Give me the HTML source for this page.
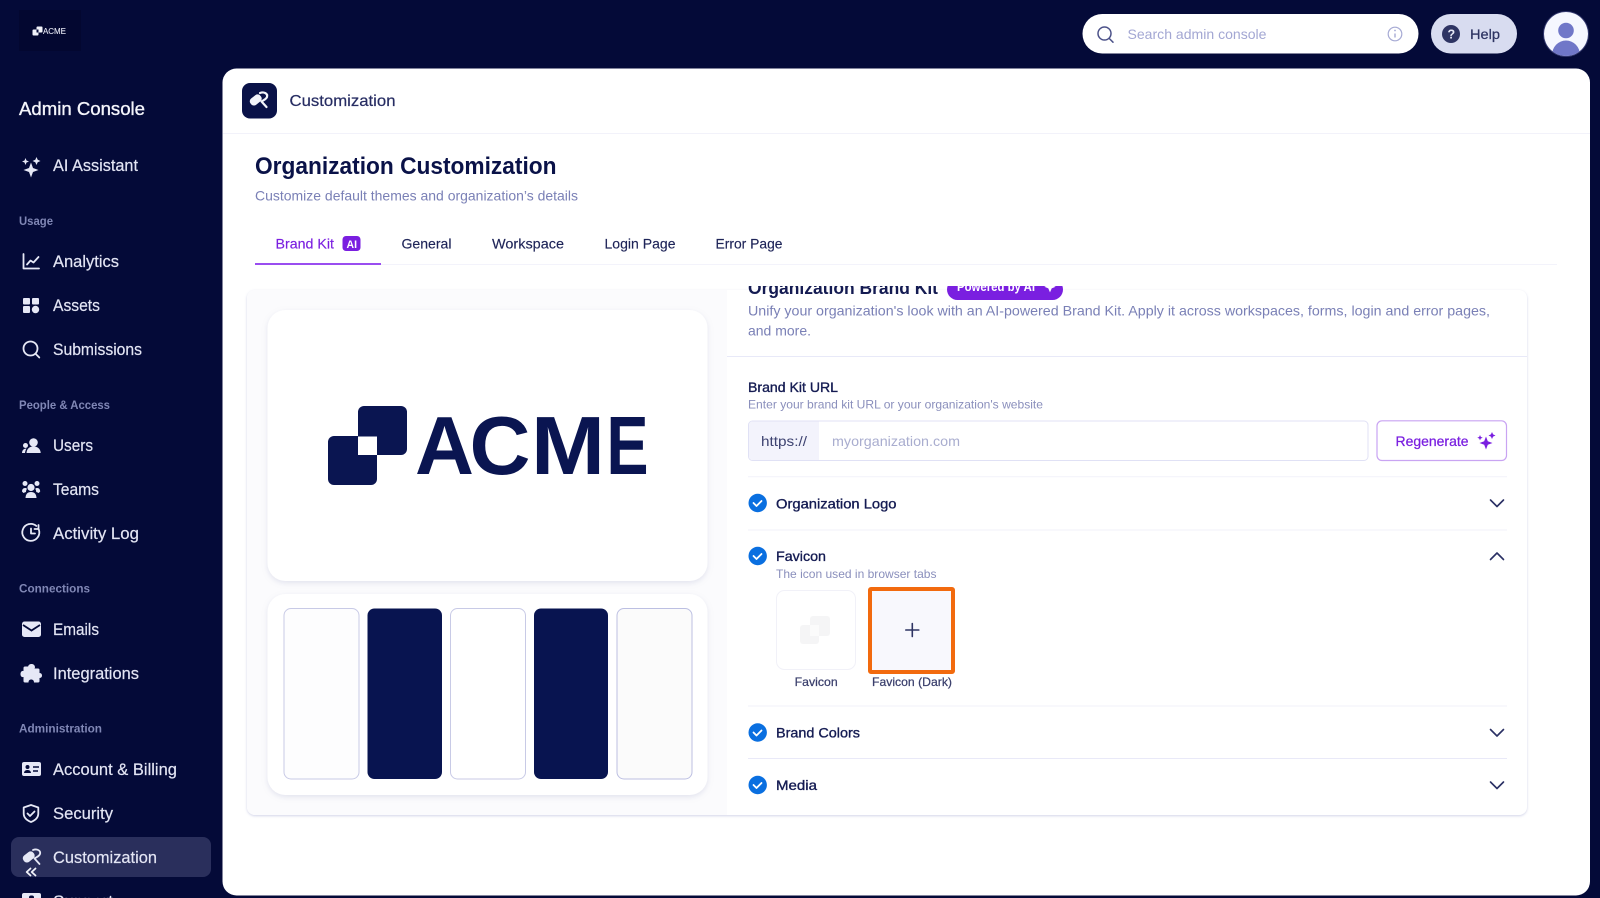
<!DOCTYPE html>
<html lang="en">
<head>
<meta charset="utf-8">
<title>Organization Customization</title>
<style>
html,body{margin:0;padding:0;width:1600px;height:898px;overflow:hidden;background:#040a38}
svg{display:block}
text{font-family:"Liberation Sans",sans-serif}
.nav{font-size:16.5px;fill:#e3e5f4;stroke:#e3e5f4;stroke-width:.18}
.lab{font-size:12px;font-weight:700;fill:#8087b5}
.tab{font-size:14px;fill:#1e2458;stroke:#1e2458;stroke-width:.15}
.h{font-size:14px;fill:#141b52;stroke:#141b52;stroke-width:.35}
.sub{font-size:12px;fill:#8a8fbc}
.cap{font-size:12px;fill:#3a3f6c;stroke:#3a3f6c;stroke-width:.25}
.ic{fill:#e6e8f6}
.st{fill:none;stroke:#e6e8f6;stroke-width:1.8;stroke-linecap:round;stroke-linejoin:round}
.chev{fill:none;stroke:#2a3064;stroke-width:1.6;stroke-linecap:round;stroke-linejoin:round}
.div{stroke:#f2f2fa;stroke-width:1}
.big{font-size:83px;font-weight:700;fill:#0a1551}
</style>
</head>
<body>
<svg xmlns="http://www.w3.org/2000/svg" width="1600" height="898" viewBox="0 0 1600 898">
<defs>
<filter id="sh" x="-5%" y="-5%" width="110%" height="110%"><feDropShadow dx="0" dy="1" stdDeviation="1.2" flood-color="#9a9fce" flood-opacity=".45"/></filter>
<filter id="sh2" x="-5%" y="-5%" width="110%" height="110%"><feDropShadow dx="0" dy="2" stdDeviation="3" flood-color="#8a8fb8" flood-opacity=".22"/></filter>
<clipPath id="clipT"><rect x="740" y="286" width="700" height="40"/></clipPath>
<clipPath id="clipAv"><circle cx="1566" cy="34" r="22"/></clipPath>
</defs>

<!-- background -->
<rect width="1600" height="898" fill="#040a38"/>
<rect x="19" y="10" width="62" height="41" fill="#030730"/>
<!-- small logo -->
<rect x="36.500" y="26.500" width="6" height="6" rx="1" fill="#f2f3fa"/>
<rect x="32.500" y="29.500" width="6" height="6" rx="1" fill="#f2f3fa"/>
<rect x="36.500" y="29.500" width="2" height="3" fill="#040a38"/>
<text x="43" y="34" font-size="8.500" fill="#e8e9f5" stroke="#e8e9f5" stroke-width=".1" textLength="23" lengthAdjust="spacingAndGlyphs">ACME</text>

<!-- main panel -->
<rect x="222.500" y="68.500" width="1367.500" height="827" rx="14" fill="#ffffff"/>

<!-- sidebar -->
<text x="19" y="115" font-size="18" fill="#f4f5fb" stroke="#f4f5fb" stroke-width=".35" textLength="126" lengthAdjust="spacingAndGlyphs">Admin Console</text>

<path class="ic" d="M31 162.500l2 5.500 5.500 2-5.500 2-2 5.500-2-5.500-5.500-2 5.500-2zM25.500 158l1 2.500 2.500 1-2.500 1-1 2.500-1-2.500-2.500-1 2.500-1zM36.500 157l1.200 2.800 2.800 1.200-2.800 1.200-1.200 2.800-1.200-2.800-2.800-1.200 2.800-1.200z"/>
<text class="nav" x="53" y="171" textLength="85" lengthAdjust="spacingAndGlyphs">AI Assistant</text>

<text class="lab" x="19" y="225" textLength="34" lengthAdjust="spacingAndGlyphs">Usage</text>
<path class="st" d="M23.500 254v14.500h15.500"/><path class="st" d="M27 264.500l3.500-4 3 2 5-5.500"/>
<text class="nav" x="53" y="267" textLength="66" lengthAdjust="spacingAndGlyphs">Analytics</text>
<rect class="ic" x="23" y="306" width="7" height="7" rx="1"/><circle class="ic" cx="35.500" cy="309.500" r="3.700"/><rect class="ic" x="23" y="298" width="7" height="6.500" rx="1"/><rect class="ic" x="32" y="298" width="7" height="6.500" rx="1"/>
<text class="nav" x="53" y="311" textLength="47" lengthAdjust="spacingAndGlyphs">Assets</text>
<circle class="st" cx="30.500" cy="348.500" r="7"/><path class="st" d="M35.800 354l3.500 3.500"/>
<text class="nav" x="53" y="355" textLength="89" lengthAdjust="spacingAndGlyphs">Submissions</text>

<text class="lab" x="19" y="409" textLength="91" lengthAdjust="spacingAndGlyphs">People &amp; Access</text>
<circle class="ic" cx="33.500" cy="442.500" r="4.300"/><path class="ic" d="M26.500 453c.3-4.500 3-6.500 7-6.500s6.900 2 7.200 6.500z"/><circle class="ic" cx="25.500" cy="445.500" r="2.500"/><path class="ic" d="M22 453c.2-2.700 1.500-4.500 4.500-4.500-.8 1.300-1.300 2.800-1.500 4.500z"/>
<text class="nav" x="53" y="451" textLength="40" lengthAdjust="spacingAndGlyphs">Users</text>
<circle class="ic" cx="31" cy="487.500" r="3.600"/><path class="ic" d="M25.500 498c.2-4 2-6 5.500-6s5.300 2 5.500 6z"/><circle class="ic" cx="25" cy="483.500" r="2.500"/><circle class="ic" cx="37" cy="483.500" r="2.500"/><path class="ic" d="M22 491.500c.1-2 1-3.500 3-3.500 1 0 1.500.3 2 .8-.6 1-1 2-1 3.200-1 .4-1.800.7-2.500 1zM40.200 491.500c-.1-2-1-3.500-3-3.500-1 0-1.500.3-2 .8.600 1 1 2 1 3.200 1 .4 1.800.7 2.500 1z"/>
<text class="nav" x="53" y="495" textLength="46" lengthAdjust="spacingAndGlyphs">Teams</text>
<path class="st" d="M38.800 529.500a8.500 8.500 0 1 1-2.500-3.600"/><path class="st" d="M38.500 525v4h-4"/><path class="st" d="M31 528.500v5h4"/>
<text class="nav" x="53" y="539" textLength="86" lengthAdjust="spacingAndGlyphs">Activity Log</text>

<text class="lab" x="19" y="592.500" textLength="71" lengthAdjust="spacingAndGlyphs">Connections</text>
<rect class="ic" x="22" y="621.500" width="19" height="15.500" rx="2.500"/><path d="M23 625l8.500 5.500 8.500-5.500" fill="none" stroke="#040a38" stroke-width="1.800"/>
<text class="nav" x="53" y="635" textLength="46" lengthAdjust="spacingAndGlyphs">Emails</text>
<path class="ic" d="M28 667.500c0-2.200 1.500-3.500 3.500-3.500s3.500 1.300 3.500 3.500l-.5 1h3.500c1 0 1.500.5 1.500 1.500v3c2 0 2.500 1.500 2.500 2.500s-.5 2.500-2.500 2.500v3c0 1-.5 1.500-1.500 1.500h-4c0-2-1.200-3-2.800-3s-2.700 1-2.700 3h-3.500c-1 0-1.500-.5-1.500-1.500v-4c-2.500.5-3-1.500-3-3s1-3.500 3-3v-3c0-1 .5-1.500 1.500-1.500h3.500z"/>
<text class="nav" x="53" y="679" textLength="86" lengthAdjust="spacingAndGlyphs">Integrations</text>

<text class="lab" x="19" y="732.500" textLength="83" lengthAdjust="spacingAndGlyphs">Administration</text>
<rect class="ic" x="22" y="762" width="19" height="14" rx="2"/><circle cx="27.500" cy="767" r="2" fill="#040a38"/><path d="M24 773c.2-2 1.500-3 3.500-3s3.300 1 3.500 3z" fill="#040a38"/><path d="M33 767h6M33 771h5" stroke="#040a38" stroke-width="1.500"/>
<text class="nav" x="53" y="775" textLength="124" lengthAdjust="spacingAndGlyphs">Account &amp; Billing</text>
<path class="st" d="M31 805l7.300 2.500v6c0 4-3 6.800-7.300 8.500-4.300-1.700-7.300-4.500-7.300-8.500v-6z"/><path class="st" d="M27.500 813.500l2.500 2.500 4.500-4.500" stroke-width="1.500"/>
<text class="nav" x="53" y="819" textLength="60" lengthAdjust="spacingAndGlyphs">Security</text>

<rect x="11" y="837" width="200" height="40" rx="8" fill="#2a2f5c"/>
<g transform="translate(-227,757)">
<rect class="ic" x="249.500" y="96" width="12.500" height="8" rx="3.500" transform="rotate(-38 255.700 100)"/>
<path class="st" d="M260 93c4-1.500 8 .5 7 4-1 2.500-3.500 3-5.500 4.500l5 5.500" stroke-width="2.200"/>
</g>
<text class="nav" x="53" y="863" textLength="104" lengthAdjust="spacingAndGlyphs">Customization</text>
<path d="M30.500 868.500l-3.800 3.500 3.800 3.500M35.500 868.500l-3.800 3.500 3.800 3.500" fill="none" stroke="#f2f3fa" stroke-width="1.800" stroke-linecap="round" stroke-linejoin="round"/>
<rect class="ic" x="22" y="893" width="19" height="12" rx="2"/><rect x="29" y="895.500" width="5" height="5" rx="2" fill="#040a38"/>
<text class="nav" x="53" y="907" textLength="60" lengthAdjust="spacingAndGlyphs">Support</text>

<!-- top bar -->
<rect x="1082.500" y="14" width="336" height="39.500" rx="19.700" fill="#ffffff"/>
<circle cx="1104.500" cy="33.500" r="6.500" fill="none" stroke="#4c5289" stroke-width="1.500"/><path d="M1109.300 38.500l3.700 3.700" stroke="#4c5289" stroke-width="1.500" stroke-linecap="round"/>
<text x="1127.500" y="39" font-size="14" fill="#a3a7d3" textLength="139" lengthAdjust="spacingAndGlyphs">Search admin console</text>
<circle cx="1395" cy="34" r="6.800" fill="none" stroke="#a6aad4" stroke-width="1.200"/><path d="M1395 33.500v4" stroke="#a6aad4" stroke-width="1.400"/><circle cx="1395" cy="30.500" r=".9" fill="#a6aad4"/>
<rect x="1431" y="14" width="86" height="39.500" rx="19.700" fill="#d8dcf0"/>
<circle cx="1451" cy="34" r="9" fill="#2e3463"/>
<text x="1447.500" y="38.500" font-size="12.500" font-weight="700" fill="#e7e9f6">?</text>
<text x="1470" y="39" font-size="14" fill="#2e3463" stroke="#2e3463" stroke-width=".25" textLength="30" lengthAdjust="spacingAndGlyphs">Help</text>
<circle cx="1566" cy="34" r="23" fill="#30356b"/>
<circle cx="1566" cy="34" r="22" fill="#f5f7ff"/>
<g clip-path="url(#clipAv)"><circle cx="1566" cy="30.500" r="7.800" fill="#7077c8"/><ellipse cx="1566" cy="55" rx="14" ry="14.500" fill="#7077c8"/></g>

<!-- panel header -->
<rect x="242" y="83" width="35" height="35.500" rx="8" fill="#0a1248"/>
<rect x="249.500" y="96" width="12.500" height="8" rx="3.500" fill="#f4f5fb" transform="rotate(-38 255.700 100)"/>
<path d="M260 93c4-1.500 8 .5 7 4-1 2.500-3.500 3-5.500 4.500l5 5.500" fill="none" stroke="#f4f5fb" stroke-width="2.200" stroke-linecap="round" stroke-linejoin="round"/>
<text x="289.500" y="106" font-size="16" fill="#262c62" stroke="#262c62" stroke-width=".2" textLength="106" lengthAdjust="spacingAndGlyphs">Customization</text>
<path d="M223 133.500h1367" stroke="#f2f2fa"/>

<text x="255" y="174" font-size="24" font-weight="700" fill="#0a1248" textLength="301.500" lengthAdjust="spacingAndGlyphs">Organization Customization</text>
<text x="255" y="200.500" font-size="14" fill="#7a80b6" textLength="323" lengthAdjust="spacingAndGlyphs">Customize default themes and organization’s details</text>

<!-- tabs -->
<path d="M255 264.500h1302" stroke="#f3f3fb" stroke-width="1"/>
<rect x="255" y="263" width="126" height="2" fill="#9a4df0"/>
<text x="275.500" y="248.500" font-size="14" fill="#7a1fe0" stroke="#7a1fe0" stroke-width=".15" textLength="58.500" lengthAdjust="spacingAndGlyphs">Brand Kit</text>
<rect x="342.500" y="236" width="18" height="15" rx="3.500" fill="#7a1fe0"/>
<text x="346.500" y="248" font-size="11" font-weight="700" fill="#fff" textLength="10.500" lengthAdjust="spacingAndGlyphs">AI</text>
<text class="tab" x="401.500" y="248.500" textLength="50" lengthAdjust="spacingAndGlyphs">General</text>
<text class="tab" x="492" y="248.500" textLength="72" lengthAdjust="spacingAndGlyphs">Workspace</text>
<text class="tab" x="604.500" y="248.500" textLength="71" lengthAdjust="spacingAndGlyphs">Login Page</text>
<text class="tab" x="715.500" y="248.500" textLength="67" lengthAdjust="spacingAndGlyphs">Error Page</text>

<!-- main card -->
<rect x="247" y="290" width="1280" height="525" rx="8" fill="#fff" filter="url(#sh)"/>
<path d="M255 290h472v525h-472a8 8 0 0 1-8-8v-509a8 8 0 0 1 8-8z" fill="#fbfbfd"/>
<rect x="267.500" y="310" width="440" height="271" rx="18" fill="#fff" filter="url(#sh2)"/>
<rect x="267.500" y="594" width="440" height="201" rx="18" fill="#fff" filter="url(#sh2)"/>

<!-- logo -->
<rect x="358" y="406" width="49" height="49" rx="6" fill="#0a1551"/>
<rect x="328" y="436" width="49" height="49" rx="6" fill="#0a1551"/>
<rect x="358" y="436.500" width="19" height="18.500" fill="#fff"/>
<text class="big" x="415" y="474" textLength="59" lengthAdjust="spacingAndGlyphs">A</text>
<text class="big" x="469.500" y="474" textLength="61" lengthAdjust="spacingAndGlyphs">C</text>
<text class="big" x="531" y="474" textLength="74" lengthAdjust="spacingAndGlyphs">M</text>
<text class="big" x="606.500" y="474" textLength="42" lengthAdjust="spacingAndGlyphs">E</text>

<!-- swatches -->
<rect x="284" y="608.500" width="75" height="170.500" rx="7" fill="#fdfdfe" stroke="#c8cae6"/>
<rect x="367.500" y="608.500" width="74.500" height="170.500" rx="7" fill="#081450"/>
<rect x="450.500" y="608.500" width="75" height="170.500" rx="7" fill="#fff" stroke="#c8cae6"/>
<rect x="534" y="608.500" width="74" height="170.500" rx="7" fill="#081450"/>
<rect x="617" y="608.500" width="75" height="170.500" rx="7" fill="#fbfbfb" stroke="#bcbfe2"/>

<!-- right top clipped -->
<g clip-path="url(#clipT)">
<text x="748" y="294" font-size="18" font-weight="700" fill="#141b52" textLength="190" lengthAdjust="spacingAndGlyphs">Organization Brand Kit</text>
<rect x="947" y="279" width="116" height="21" rx="10.500" fill="#7a1fe0"/>
<text x="957" y="291" font-size="13" font-weight="700" fill="#fff" textLength="78" lengthAdjust="spacingAndGlyphs">Powered by AI</text>
<path d="M1050 281l1.700 4 4 1.700-4 1.700-1.700 4-1.700-4-4-1.700 4-1.700z" fill="#fff"/>
</g>
<text x="748" y="315.500" font-size="14" fill="#7a80b6" textLength="742" lengthAdjust="spacingAndGlyphs">Unify your organization's look with an AI-powered Brand Kit. Apply it across workspaces, forms, login and error pages,</text>
<text x="748" y="335.500" font-size="14" fill="#7a80b6" textLength="63" lengthAdjust="spacingAndGlyphs">and more.</text>
<path d="M727 356.500h800" stroke="#e8e9f8"/>

<text class="h" x="748" y="392" textLength="90" lengthAdjust="spacingAndGlyphs">Brand Kit URL</text>
<text class="sub" x="748" y="408.500" textLength="295" lengthAdjust="spacingAndGlyphs">Enter your brand kit URL or your organization's website</text>

<!-- input -->
<rect x="748.500" y="421" width="619.500" height="39.500" rx="4" fill="#fff" stroke="#e0e1f5"/>
<path d="M752.500 421.500h66.500v38.500h-66.500a3.500 3.500 0 0 1-3.500-3.500v-31.500a3.500 3.500 0 0 1 3.500-3.500z" fill="#f3f3fc"/>
<text x="761" y="446" font-size="14" fill="#3d4270" textLength="46" lengthAdjust="spacingAndGlyphs">https://</text>
<text x="832" y="446" font-size="14" fill="#a9adcf" textLength="128" lengthAdjust="spacingAndGlyphs">myorganization.com</text>
<rect x="1377" y="420.800" width="129.500" height="39.700" rx="5" fill="#fff" stroke="#c9a4f2" stroke-width="1.200"/>
<text x="1395.500" y="446" font-size="14" fill="#7a1fe0" stroke="#7a1fe0" stroke-width=".25" textLength="73" lengthAdjust="spacingAndGlyphs">Regenerate</text>
<path fill="#7a1fe0" d="M1486 436.500l1.800 4.700 4.700 1.800-4.700 1.800-1.800 4.700-1.800-4.700-4.700-1.800 4.700-1.800zM1480 435l.8 1.900 1.900.8-1.900.8-.8 1.900-.8-1.900-1.900-.8 1.900-.8zM1492 432l1.100 2.400 2.400 1.100-2.400 1.100-1.100 2.400-1.100-2.400-2.400-1.100 2.400-1.100z"/>

<!-- accordion -->
<path class="div" d="M748 476.800h759M748 530h759M748 706h759"/>
<path d="M748 758.500h759" stroke="#e9e9f8"/>

<g id="chk">
<circle cx="757.700" cy="503" r="9.200" fill="#0a6fe0"/><path d="M753.500 503l3 3 5-5" fill="none" stroke="#fff" stroke-width="1.800" stroke-linecap="round" stroke-linejoin="round"/>
<circle cx="757.700" cy="556" r="9.200" fill="#0a6fe0"/><path d="M753.500 556l3 3 5-5" fill="none" stroke="#fff" stroke-width="1.800" stroke-linecap="round" stroke-linejoin="round"/>
<circle cx="757.700" cy="732.500" r="9.200" fill="#0a6fe0"/><path d="M753.500 732.500l3 3 5-5" fill="none" stroke="#fff" stroke-width="1.800" stroke-linecap="round" stroke-linejoin="round"/>
<circle cx="757.700" cy="785" r="9.200" fill="#0a6fe0"/><path d="M753.500 785l3 3 5-5" fill="none" stroke="#fff" stroke-width="1.800" stroke-linecap="round" stroke-linejoin="round"/>
</g>

<text class="h" x="776" y="508.500" textLength="120.500" lengthAdjust="spacingAndGlyphs">Organization Logo</text>
<text class="h" x="776" y="561" textLength="50" lengthAdjust="spacingAndGlyphs">Favicon</text>
<text class="sub" x="776" y="578" textLength="160.500" lengthAdjust="spacingAndGlyphs">The icon used in browser tabs</text>
<text class="h" x="776" y="737.500" textLength="84" lengthAdjust="spacingAndGlyphs">Brand Colors</text>
<text class="h" x="776" y="790" textLength="41" lengthAdjust="spacingAndGlyphs">Media</text>

<path class="chev" d="M1490.500 500l6.500 6.500 6.500-6.500"/>
<path class="chev" d="M1490.500 559.500l6.500-6.500 6.500 6.500"/>
<path class="chev" d="M1490.500 729.500l6.500 6.500 6.500-6.500"/>
<path class="chev" d="M1490.500 782l6.500 6.500 6.500-6.500"/>

<!-- favicon tiles -->
<rect x="776.500" y="590.500" width="79" height="79" rx="8" fill="#fff" stroke="#f1f1f8"/>
<rect x="810" y="616" width="20" height="20" rx="3" fill="#f5f5f6"/>
<rect x="800" y="625" width="19" height="19" rx="3" fill="#f5f5f6"/>
<rect x="810" y="625" width="9" height="11" fill="#fbfbfb"/>
<text class="cap" x="794.700" y="686" textLength="43" lengthAdjust="spacingAndGlyphs">Favicon</text>

<rect x="870" y="589" width="83" height="83" fill="#f8f8fd" stroke="#f26a0e" stroke-width="4" rx="1"/>
<path d="M912.300 623.500v13M905.800 630h13" stroke="#2e3463" stroke-width="1.600" stroke-linecap="round"/>
<text class="cap" x="872" y="686" textLength="80" lengthAdjust="spacingAndGlyphs">Favicon (Dark)</text>
</svg>
</body>
</html>
